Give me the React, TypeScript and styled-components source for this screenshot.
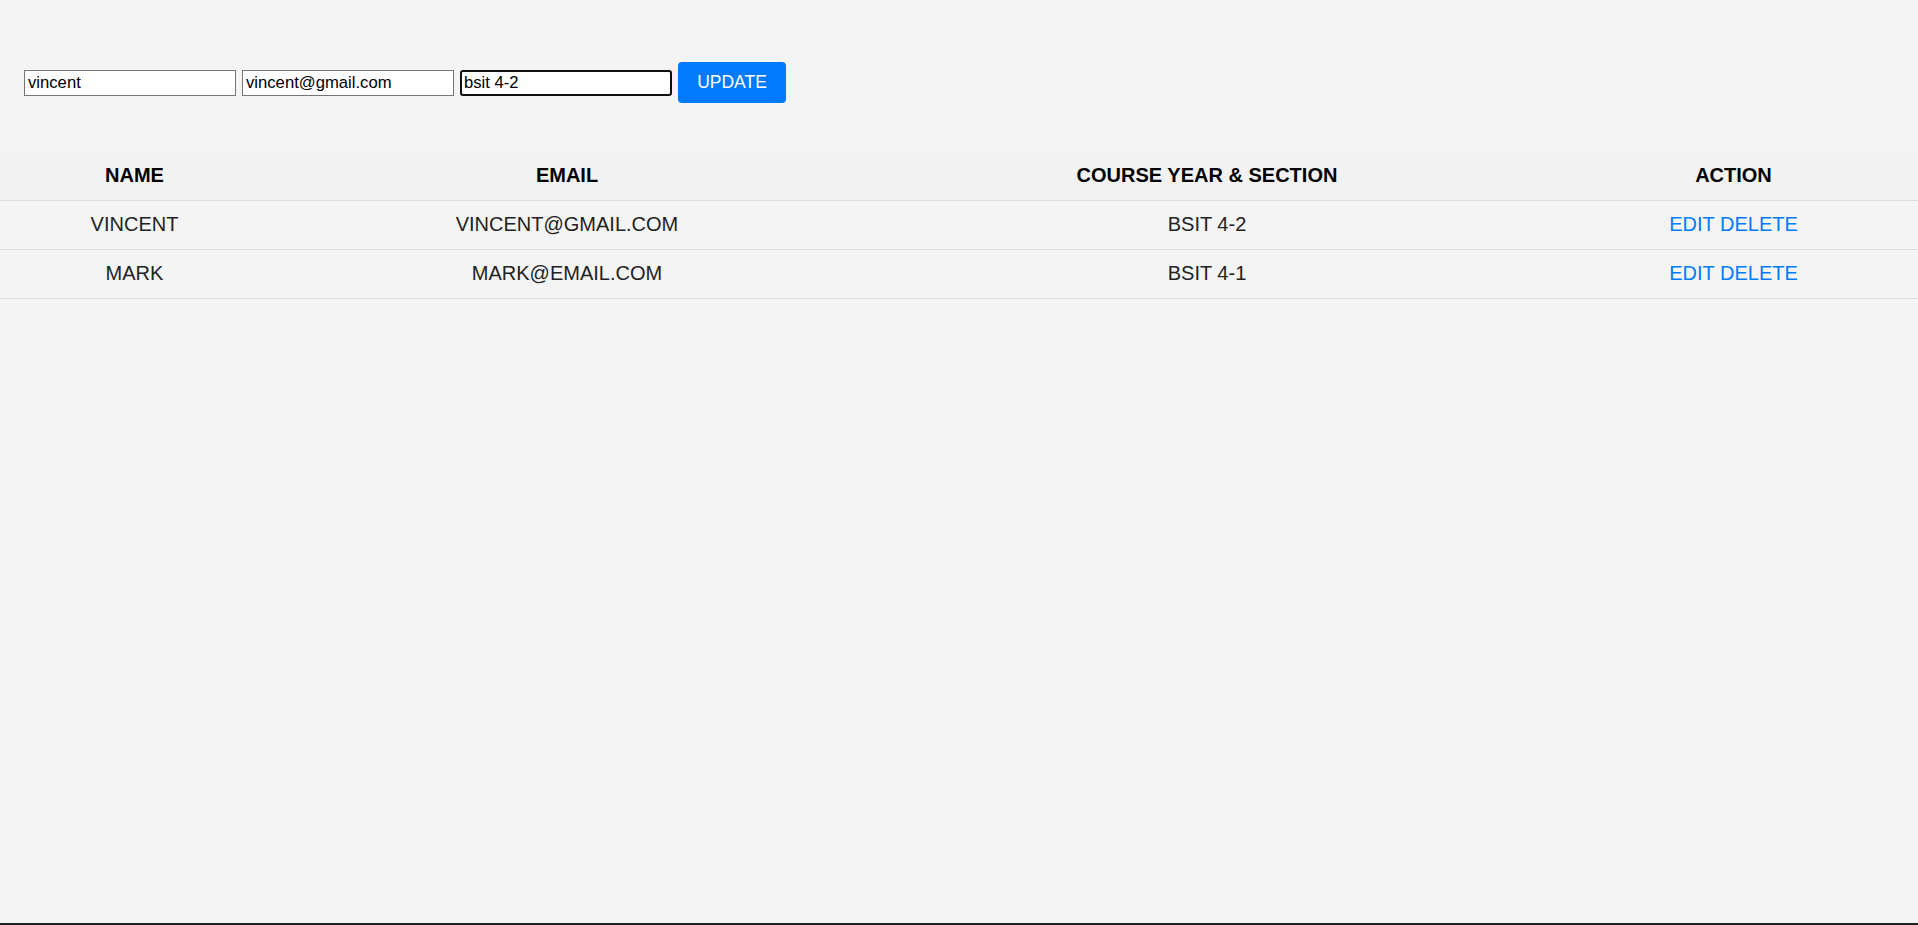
import React from "react";
import styled, { createGlobalStyle, css } from "styled-components";

const GlobalStyle = createGlobalStyle`
  html, body {
    margin: 0;
    padding: 0;
    background: #f4f4f4;
    font-family: "Liberation Sans", Arial, sans-serif;
  }
  * { box-sizing: border-box; }
`;

const Page = styled.div`
  height: 100vh;
  overflow: hidden;
  display: flex;
  flex-direction: column;
  background: #f4f4f4;
  border-bottom: 2px solid #1f1f1f;
`;

const Form = styled.form`
  display: flex;
  align-items: center;
  gap: 6px;
  padding: 62px 24px 0 24px;
  margin-bottom: 49px;
`;

const Input = styled.input<{ $focused?: boolean }>`
  width: 212px;
  height: 26px;
  padding: 1px 3px;
  border: 1px solid #767676;
  border-radius: 0;
  background: #ffffff;
  font-family: "Liberation Sans", Arial, sans-serif;
  font-size: 16.67px;
  color: #000;
  outline: none;
  ${(p) =>
    p.$focused &&
    css`
      border: 2px solid #101010;
      border-radius: 3px;
      padding: 0 2px;
    `}
`;

const Button = styled.button`
  width: 108px;
  height: 41px;
  border: none;
  border-radius: 4px;
  background: #007bff;
  color: #ffffff;
  font-family: "Liberation Sans", Arial, sans-serif;
  font-size: 17.5px;
  cursor: pointer;
`;

const Table = styled.table`
  width: 100%;
  border-collapse: collapse;
  font-size: 20px;
  text-transform: uppercase;
`;

const HeadCell = styled.th`
  background: #f2f2f2;
  color: #000;
  font-weight: bold;
  height: 48px;
  padding: 0 12px;
  text-align: center;
  border-bottom: 1px solid #dddddd;
`;

const Cell = styled.td`
  color: #222;
  font-weight: normal;
  height: 49px;
  padding: 0 12px;
  text-align: center;
  border-bottom: 1px solid #dddddd;
`;

const ActionLink = styled.a`
  color: #007bff;
  text-decoration: none;
  cursor: pointer;
`;

const students = [
  { name: "vincent", email: "vincent@gmail.com", course: "bsit 4-2" },
  { name: "mark", email: "mark@email.com", course: "bsit 4-1" },
];

export default function App() {
  return (
    <>
      <GlobalStyle />
      <Page>
        <Form onSubmit={(e) => e.preventDefault()}>
          <Input defaultValue="vincent" />
          <Input defaultValue="vincent@gmail.com" />
          <Input defaultValue="bsit 4-2" $focused />
          <Button type="submit">UPDATE</Button>
        </Form>
        <Table>
          <colgroup>
            <col style={{ width: "269px" }} />
            <col style={{ width: "596px" }} />
            <col style={{ width: "684px" }} />
            <col style={{ width: "369px" }} />
          </colgroup>
          <thead>
            <tr>
              <HeadCell>Name</HeadCell>
              <HeadCell>Email</HeadCell>
              <HeadCell>Course Year &amp; Section</HeadCell>
              <HeadCell>Action</HeadCell>
            </tr>
          </thead>
          <tbody>
            {students.map((s) => (
              <tr key={s.email}>
                <Cell>{s.name}</Cell>
                <Cell>{s.email}</Cell>
                <Cell>{s.course}</Cell>
                <Cell>
                  <ActionLink>Edit</ActionLink> <ActionLink>Delete</ActionLink>
                </Cell>
              </tr>
            ))}
          </tbody>
        </Table>
      </Page>
    </>
  );
}
